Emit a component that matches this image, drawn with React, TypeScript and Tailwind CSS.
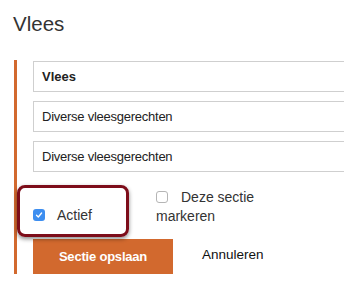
import React from 'react';

const CheckedBox: React.FC = () => (
  <span className="inline-flex items-center justify-center w-[12px] h-[12px] rounded-[3px] bg-[#3d8ef0]">
    <svg width="8" height="8" viewBox="0 0 8 8" fill="none">
      <path d="M1.5 4.2 L3.3 6 L6.6 2" stroke="white" strokeWidth="1.3" strokeLinecap="round" strokeLinejoin="round" />
    </svg>
  </span>
);

const App: React.FC = () => {
  const fields = [
    { value: 'Vlees', bold: true },
    { value: 'Diverse vleesgerechten', bold: false },
    { value: 'Diverse vleesgerechten', bold: false }
  ];

  return (
    <div className="w-[344px] h-[282px] overflow-hidden bg-white font-['Liberation_Sans',Arial,sans-serif] text-[#333]">
      <h1 className="pl-[13px] pt-[12px] text-[20.5px] leading-[24px] font-normal">Vlees</h1>

      <section className="ml-[14px] mt-[24px] border-l-[3px] border-[#d2692e] pl-[16px] pt-[1px]">
        <div className="flex flex-col gap-[9px]">
          {fields.map((field, index) => (
            <div
              key={index}
              className={`w-[330px] h-[31px] border border-[#cfcfcf] bg-white flex items-center pl-[8px] text-[13px] text-[#222] ${
                field.bold ? 'font-bold' : 'tracking-[-0.25px]'
              }`}
            >
              {field.value}
            </div>
          ))}
        </div>

        {/* checkboxes */}
        <div className="relative flex items-start mt-[16px]">
          <label className="w-[123px] pt-[18px] flex items-center gap-[12px] text-[14px] leading-[18px]">
            <CheckedBox />
            <span>Actief</span>
          </label>
          <label className="block w-[100px] text-[14px] leading-[19px]">
            <span className="inline-block w-[12px] h-[12px] rounded-[3px] border border-[#b5b5b5] bg-white align-[-1px] mr-[13px]" />
            Deze sectie markeren
          </label>

          {/* highlight annotation */}
          <div className="absolute -left-[16px] -top-[3px] w-[112px] h-[52px] rounded-[8px] border-[3px] border-[#7d0d1a] shadow-[0_2px_4px_rgba(0,0,0,0.45)]" />
        </div>

        <div className="flex items-center mt-[13px]">
          <button className="w-[140px] h-[35px] bg-[#d2692e] text-white font-bold text-[13px] tracking-[-0.2px]">
            Sectie opslaan
          </button>
          <span className="ml-[29px] -mt-[3px] text-[13.5px] text-[#111]">Annuleren</span>
        </div>
      </section>
    </div>
  );
};

export default App;
